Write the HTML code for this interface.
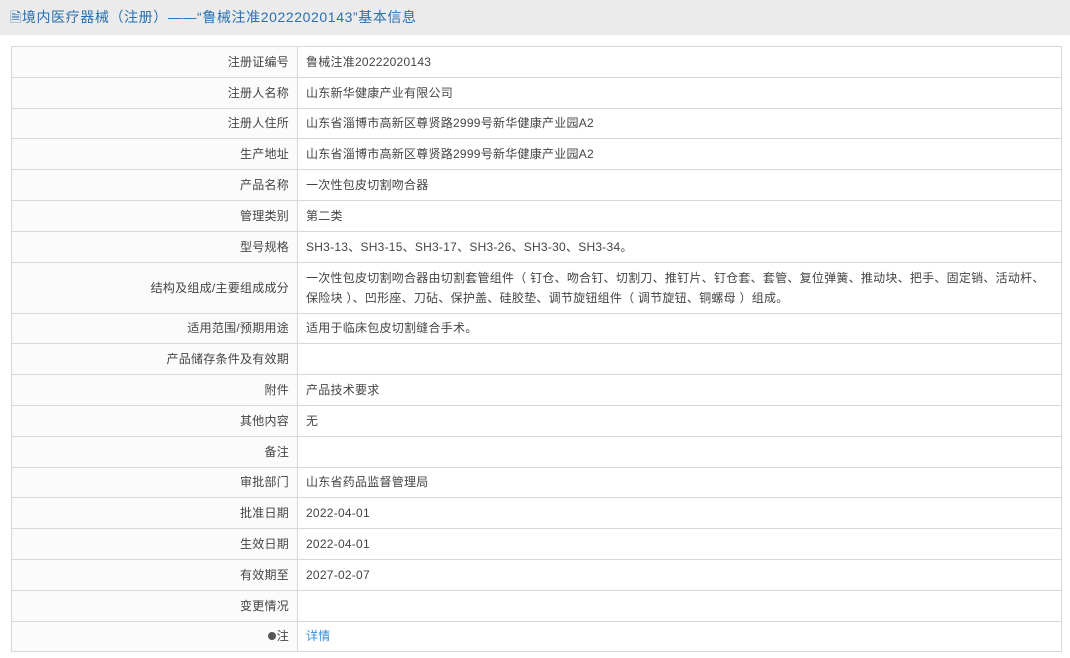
<!DOCTYPE html>
<html><head><meta charset="utf-8"><style>
body{margin:0;width:1070px;height:658px;background:#fff;font-family:"Liberation Sans","Noto Sans CJK SC",sans-serif;font-size:12px;color:#444;overflow:hidden}
.hd{height:35px;background:#ebebeb;color:#2a6fb0;font-size:14px;line-height:35px;padding-left:10px;letter-spacing:0.6px}
table{position:absolute;left:11px;top:46px;width:1051px;border-collapse:collapse}
td{border:1px solid #d8d8d8;height:29.8px;padding:0 8px;line-height:20px;letter-spacing:0.25px}
td.l{width:269px;text-align:right;background:#fbfbfb}
td.v{background:#fff}
a{color:#3b8ed8;text-decoration:none}
</style></head><body>
<div class="hd">🗎境内医疗器械（注册）——“鲁械注准20222020143”基本信息</div>
<table>
<tr><td class="l">注册证编号</td><td class="v">鲁械注准20222020143</td></tr>
<tr><td class="l">注册人名称</td><td class="v">山东新华健康产业有限公司</td></tr>
<tr><td class="l">注册人住所</td><td class="v">山东省淄博市高新区尊贤路2999号新华健康产业园A2</td></tr>
<tr><td class="l">生产地址</td><td class="v">山东省淄博市高新区尊贤路2999号新华健康产业园A2</td></tr>
<tr><td class="l">产品名称</td><td class="v">一次性包皮切割吻合器</td></tr>
<tr><td class="l">管理类别</td><td class="v">第二类</td></tr>
<tr><td class="l">型号规格</td><td class="v">SH3-13、SH3-15、SH3-17、SH3-26、SH3-30、SH3-34。</td></tr>
<tr><td class="l" style="height:50px">结构及组成/主要组成成分</td><td class="v">一次性包皮切割吻合器由切割套管组件（ 钉仓、吻合钉、切割刀、推钉片、钉仓套、套管、复位弹簧、推动块、把手、固定销、活动杆、保险块 ）、凹形座、刀砧、保护盖、硅胶垫、调节旋钮组件（ 调节旋钮、铜螺母 ）组成。</td></tr>
<tr><td class="l">适用范围/预期用途</td><td class="v">适用于临床包皮切割缝合手术。</td></tr>
<tr><td class="l">产品储存条件及有效期</td><td class="v"></td></tr>
<tr><td class="l">附件</td><td class="v">产品技术要求</td></tr>
<tr><td class="l">其他内容</td><td class="v">无</td></tr>
<tr><td class="l">备注</td><td class="v"></td></tr>
<tr><td class="l">审批部门</td><td class="v">山东省药品监督管理局</td></tr>
<tr><td class="l">批准日期</td><td class="v">2022-04-01</td></tr>
<tr><td class="l">生效日期</td><td class="v">2022-04-01</td></tr>
<tr><td class="l">有效期至</td><td class="v">2027-02-07</td></tr>
<tr><td class="l">变更情况</td><td class="v"></td></tr>
<tr><td class="l"><span style="display:inline-block;width:8px;height:8px;border-radius:50%;background:#555;margin-right:1px"></span>注</td><td class="v"><a>详情</a></td></tr>
</table>
</body></html>
